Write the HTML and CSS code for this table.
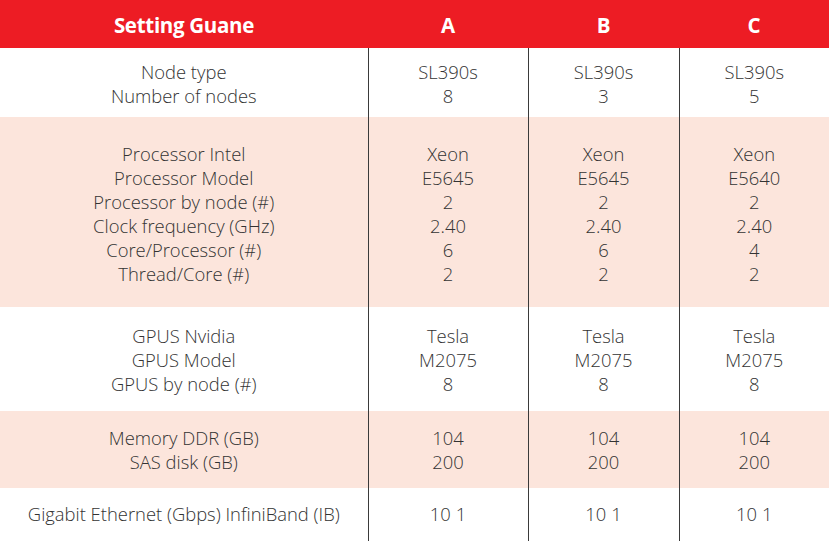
FILE: index.html
```html
<!DOCTYPE html>
<html>
<head>
<meta charset="utf-8">
<link rel="stylesheet" href="styles.css">
</head>
<body>
<table class="spec">
  <colgroup>
    <col class="c-label"><col class="c-a"><col class="c-b"><col class="c-c">
  </colgroup>
  <thead>
    <tr class="head">
      <th>Setting Guane</th><th>A</th><th>B</th><th>C</th>
    </tr>
  </thead>
  <tbody>
    <tr class="r1">
      <td>Node type<br>Number of nodes</td>
      <td>SL390s<br>8</td><td>SL390s<br>3</td><td>SL390s<br>5</td>
    </tr>
    <tr class="r2 pink">
      <td>Processor Intel<br>Processor Model<br>Processor by node (#)<br>Clock frequency (GHz)<br>Core/Processor (#)<br>Thread/Core (#)</td>
      <td>Xeon<br>E5645<br>2<br>2.40<br>6<br>2</td>
      <td>Xeon<br>E5645<br>2<br>2.40<br>6<br>2</td>
      <td>Xeon<br>E5640<br>2<br>2.40<br>4<br>2</td>
    </tr>
    <tr class="r3">
      <td>GPUS Nvidia<br>GPUS Model<br>GPUS by node (#)</td>
      <td>Tesla<br>M2075<br>8</td><td>Tesla<br>M2075<br>8</td><td>Tesla<br>M2075<br>8</td>
    </tr>
    <tr class="r4 pink">
      <td>Memory DDR (GB)<br>SAS disk (GB)</td>
      <td>104<br>200</td><td>104<br>200</td><td>104<br>200</td>
    </tr>
    <tr class="r5">
      <td>Gigabit Ethernet (Gbps) InfiniBand (IB)</td>
      <td>10 1</td><td>10 1</td><td>10 1</td>
    </tr>
  </tbody>
</table>
</body>
</html>
```
FILE: styles.css
```css
html, body {
  margin: 0;
  padding: 0;
  background: #ffffff;
}
.spec {
  width: 829px;
  border-collapse: collapse;
  table-layout: fixed;
  font-family: "Open Sans", "Liberation Sans", sans-serif;
  font-weight: 300;
  font-size: 18.4px;
  line-height: 24px;
  color: #333333;
}
.c-label { width: 368px; }
.c-a { width: 160px; }
.c-b { width: 151px; }
.c-c { width: 150px; }
.spec th, .spec td {
  padding: 2px 0 0 0;
  text-align: center;
  vertical-align: middle;
}
.spec td + td {
  border-left: 1px solid #3a3a3a;
}
.head {
  background: #ed1c24;
  height: 48px;
}
.head th {
  color: #ffffff;
  font-weight: 700;
  font-size: 20.5px;
  letter-spacing: -0.3px;
}
.pink { background: #fce5dc; }
.r1 { height: 69px; }
.r2 { height: 190px; }
.r2 td { padding-top: 4px; }
.r3 { height: 104px; }
.r4 { height: 77px; }
.r4 td { padding-top: 0; }
.r5 { height: 53px; }
.r5 td { padding: 0 0 2px 0; }
```
